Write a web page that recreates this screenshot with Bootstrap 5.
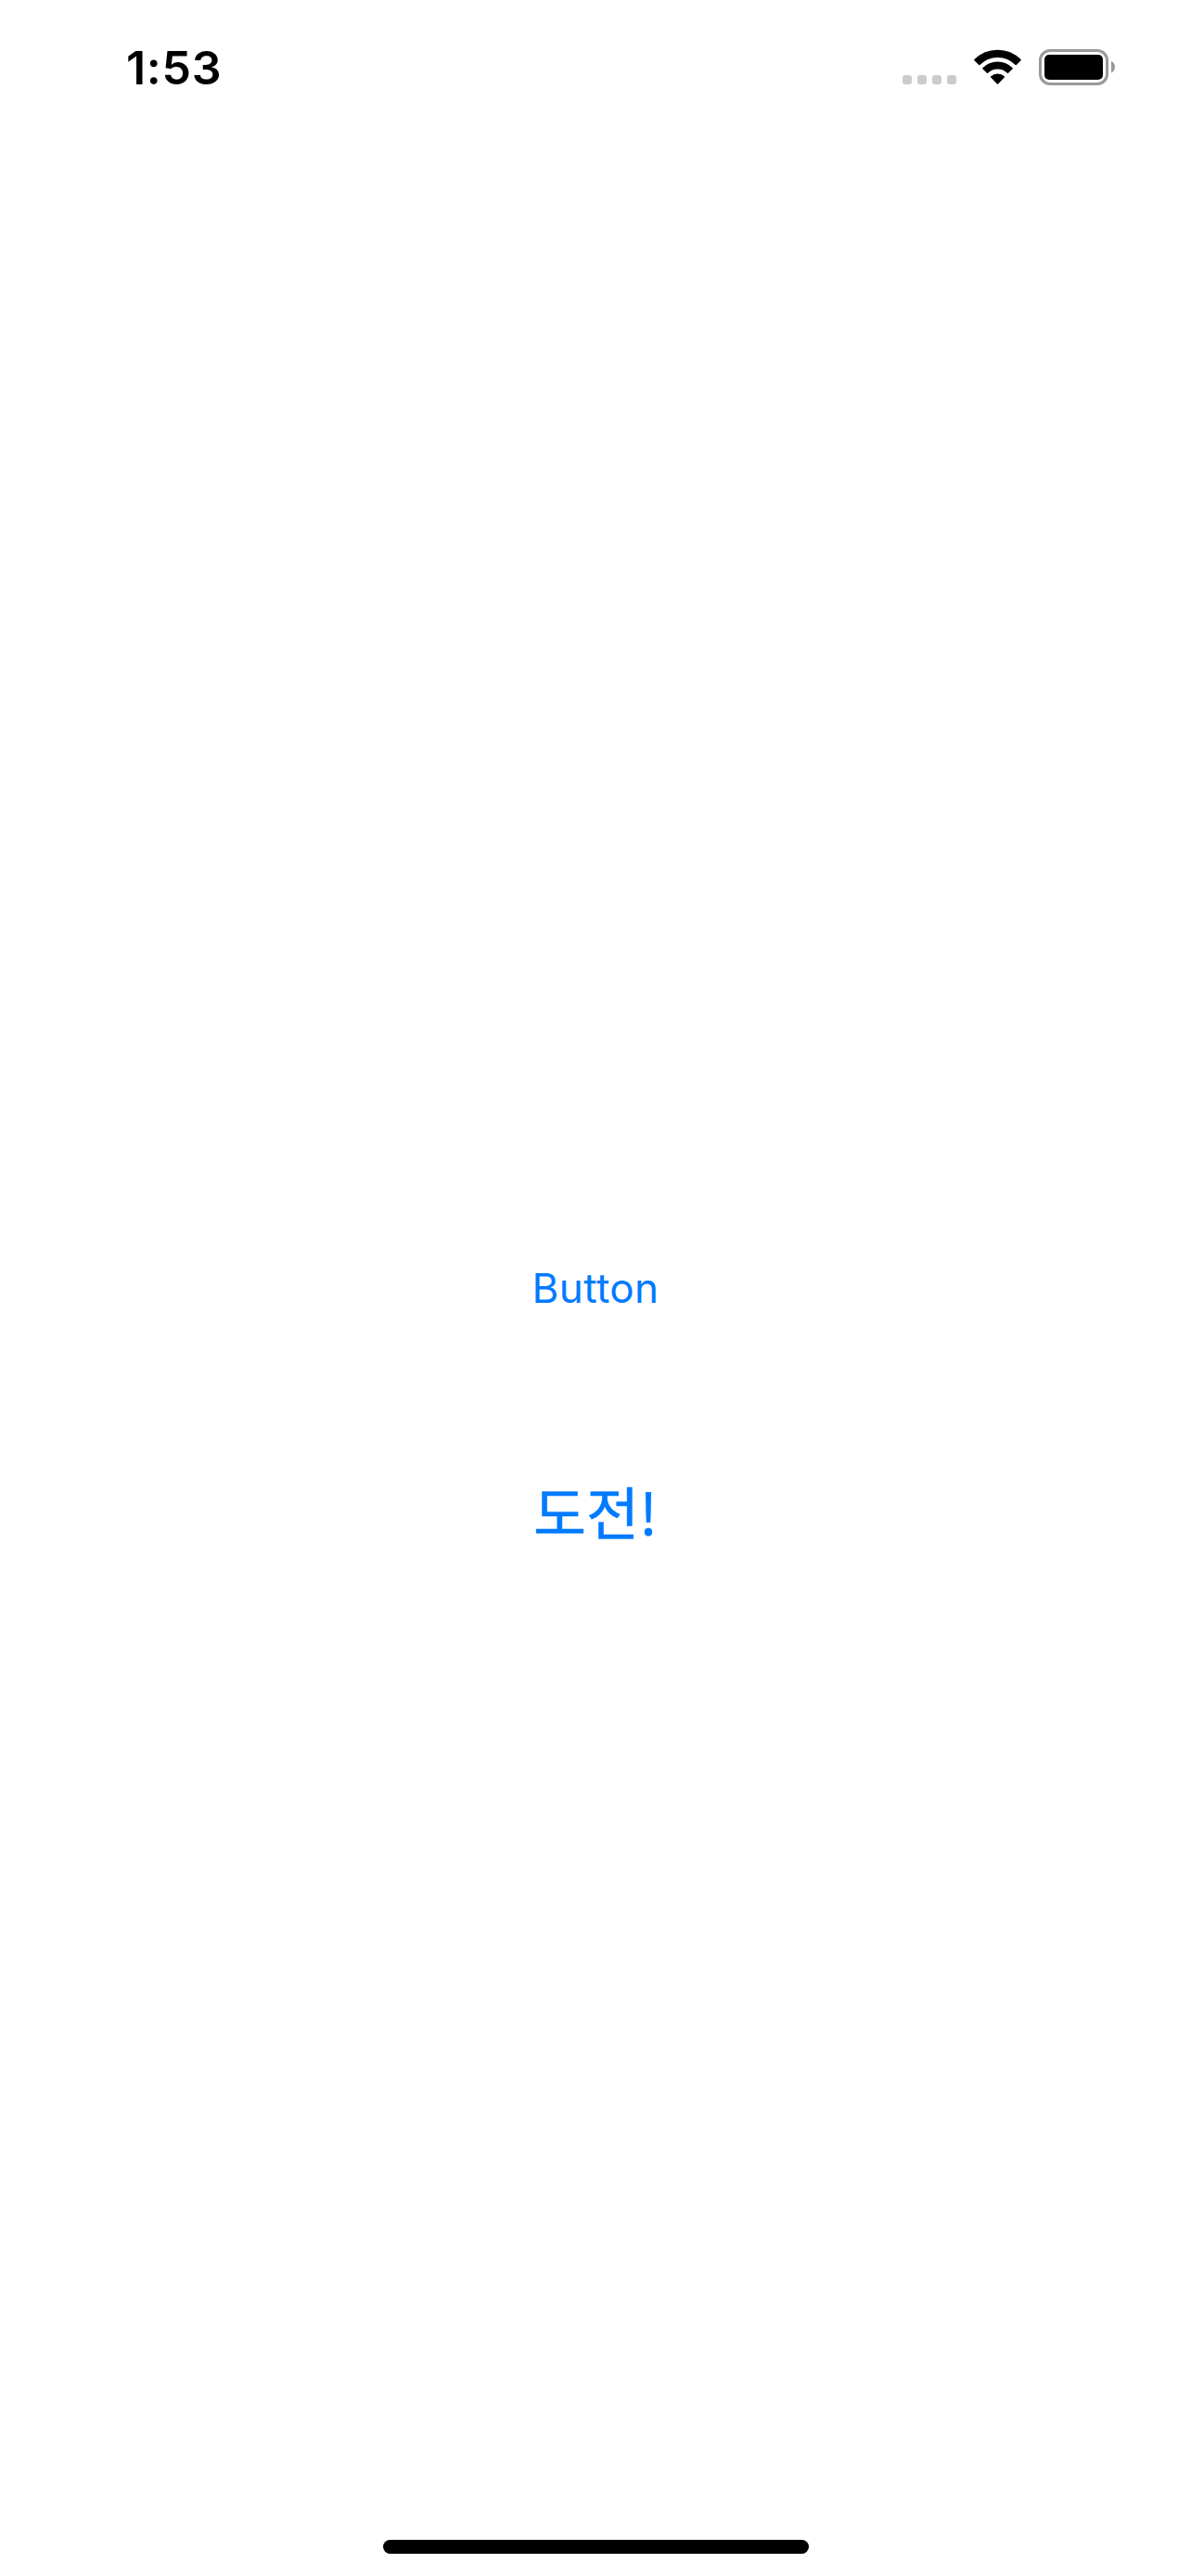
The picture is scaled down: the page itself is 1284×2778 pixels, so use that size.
<!DOCTYPE html>
<html lang="ko">
<head>
<meta charset="utf-8">
<meta name="viewport" content="width=device-width, initial-scale=1">
<title>Button</title>
<link href="https://cdn.jsdelivr.net/npm/bootstrap@5.3.0/dist/css/bootstrap.min.css" rel="stylesheet">
<style>
  body { font-family: Inter, "Noto Sans CJK KR", sans-serif; color: #000; background: #fff; }
  .screen { height: 2778px; }
  .status-bar { height: 141px; padding: 50px 81px 0 136px; }
  .clock { font-size: 50px; font-weight: 600; line-height: 46px; letter-spacing: .7px; }
  .status-icons svg { display: block; }
  .content-area { padding-top: 1213px; }
  .ios-btn { --bs-btn-color: #007aff; --bs-btn-hover-color: #007aff; --bs-btn-active-color: #007aff; --bs-btn-border-width: 0; --bs-btn-padding-x: 0; --bs-btn-padding-y: 0; }
  .plain-label { font-size: 44px; line-height: 70px; letter-spacing: .4px; }
  .challenge-label { font-size: 62px; line-height: 90px; margin-top: 160px; font-family: "Noto Sans CJK KR", sans-serif; -webkit-text-stroke: .5px #007aff; }
  .home-indicator { width: 459px; height: 15px; margin-bottom: 24px; background: #000; }
</style>
</head>
<body>
<div class="screen d-flex flex-column overflow-hidden">
  <header class="status-bar d-flex justify-content-between align-items-start flex-shrink-0">
    <div class="clock">1:53</div>
    <div class="status-icons d-flex">
      <svg width="76" height="45" viewBox="973 50 76 45" fill="#cbcbcb" aria-hidden="true">
        <rect x="973" y="81" width="10" height="10" rx="3"/>
        <rect x="989" y="81" width="10" height="10" rx="3"/>
        <rect x="1005" y="81" width="10" height="10" rx="3"/>
        <rect x="1021" y="81" width="10" height="10" rx="3"/>
      </svg>
      <svg width="70" height="45" viewBox="1049 50 70 45" stroke="#000" stroke-width="1.6" stroke-linejoin="round" aria-hidden="true">
        <path d="M1051 64.6A34.6 34.6 0 0 1 1100 64.6L1095.2 69.4A27.8 27.8 0 0 0 1055.8 69.4Z"/>
        <path d="M1059.9 73.7A22 22 0 0 1 1091.1 73.7L1086.5 78.2A15.5 15.5 0 0 0 1064.5 78.2Z"/>
        <path d="M1068.8 82.9A9.6 9.6 0 0 1 1082.2 82.9L1075.5 89.9Z"/>
      </svg>
      <svg width="84" height="45" viewBox="1119 50 84 45" aria-hidden="true">
        <rect x="1121.5" y="54.5" width="72" height="36" rx="10.5" fill="none" stroke="#999" stroke-width="3"/>
        <rect x="1126" y="59" width="63" height="27" rx="5"/>
        <path d="M1198 66C1203.3 68 1203.3 76.5 1198 78.5Z" fill="#999"/>
      </svg>
    </div>
  </header>
  <main class="content-area d-flex flex-column align-items-center flex-grow-1">
    <button type="button" class="btn ios-btn plain-label">Button</button>
    <button type="button" class="btn ios-btn challenge-label">도전!</button>
  </main>
  <div class="home-indicator rounded-pill mx-auto flex-shrink-0"></div>
</div>
<script src="https://cdn.jsdelivr.net/npm/bootstrap@5.3.0/dist/js/bootstrap.bundle.min.js"></script>
</body>
</html>
